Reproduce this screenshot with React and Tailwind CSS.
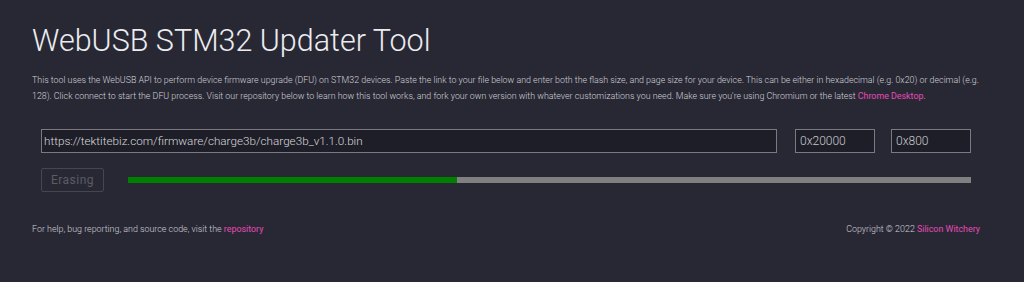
export default function App() {
  return (
    <div className="min-h-[282px] w-full bg-[#282834] text-[#d8d8dc]" style={{ fontFamily: "Roboto, 'Noto Sans', sans-serif" }}>
      <div className="px-8 pt-[22px]">
        <h1 className="text-[30.5px] font-light leading-[38px] text-[#ececf0]">WebUSB STM32 Updater Tool</h1>
        <p className="mt-[12px] text-[8.85px] leading-[16px] font-light text-[#d0d0d6] pr-[10px]">
          This tool uses the WebUSB API to perform device firmware upgrade (DFU) on STM32 devices. Paste the link to your file below and enter both the flash size, and page size for your device. This can be either in hexadecimal (e.g. 0x20) or decimal (e.g. 128). Click connect to start the DFU process. Visit our repository below to learn how this tool works, and fork your own version with whatever customizations you need. Make sure you're using Chromium or the latest <a className="text-[#e64bb8] font-normal">Chrome Desktop</a>.
        </p>
        <div className="mt-[25px] pl-[9px] pr-[21px]">
          <div className="flex items-center gap-[18px]">
            <input readOnly value="https://tektitebiz.com/firmware/charge3b/charge3b_v1.1.0.bin" className="h-[24px] flex-1 border border-[#7a7a80] bg-[#1e1e28] px-[2px] text-[11.7px] font-light text-[#d8d8dc] outline-none" />
            <input readOnly value="0x20000" className="h-[24px] w-[80px] border border-[#7a7a80] bg-[#1e1e28] px-[4px] text-[12px] font-light text-[#c8c8cc] outline-none" />
            <input readOnly value="0x800" className="h-[24px] w-[80px] ml-[-2px] border border-[#7a7a80] bg-[#1e1e28] px-[4px] text-[12px] font-light text-[#c8c8cc] outline-none" />
          </div>
          <div className="mt-[15px] flex items-center gap-[24px]">
            <button className="h-[24px] w-[63px] rounded-[2px] border border-[#46464f] text-[12px] tracking-[0.5px] text-[#5c5c64]">Erasing</button>
            <div className="flex h-[6px] flex-1 bg-[#808080]">
              <div className="h-full bg-[#008000]" style={{ width: "39%" }} />
            </div>
          </div>
        </div>
        <div className="mt-[31px] flex items-center justify-between pr-[12px] text-[8.9px] font-light text-[#d0d0d6]">
          <span>For help, bug reporting, and source code, visit the <a className="text-[#e64bb8] font-normal">repository</a></span>
          <span>Copyright © 2022 <a className="text-[#e64bb8] font-normal">Silicon Witchery</a></span>
        </div>
      </div>
    </div>
  );
}
